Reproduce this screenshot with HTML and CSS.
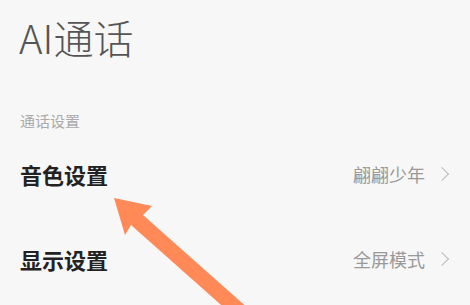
FILE: index.html
```html
<!DOCTYPE html>
<html>
<head>
<meta http-equiv="Content-Type" content="text/html; charset=utf-8"/>
<title>AI通话</title>
<link rel="stylesheet" href="styles.css">
</head>
<body>
<div class="page">
  <h1 class="title">AI通话</h1>

  <div class="group-label">通话设置</div>

  <div class="row">
    <span class="row-name">音色设置</span>
    <span class="row-value">翩翩少年<span class="chevron"></span></span>
  </div>

  <div class="row">
    <span class="row-name">显示设置</span>
    <span class="row-value">全屏模式<span class="chevron"></span></span>
  </div>

  <!-- annotation arrow drawn over the page -->
  <svg class="pointer" width="470" height="305" viewBox="0 0 470 305">
    <polygon fill="#ff8a58" points="114,198 152,206 143,215 250,310 238,320 131,225 125,235"/>
  </svg>
</div>
</body>
</html>
```

FILE: styles.css
```css
body {
  margin: 0;
  background-color: #f7f7f7;
  font-family: "Noto Sans CJK SC", "Noto Sans", sans-serif;
}

.page {
  position: relative;
  height: 305px;
  overflow: hidden;
  padding: 0 23px 0 19px;
}

.title {
  margin: 0;
  padding-top: 15px;
  font-size: 40px;
  line-height: 44px;
  font-weight: 300;
  color: #555;
}

.group-label {
  margin-top: 52px;
  padding-left: 1px;
  font-size: 15px;
  line-height: 20px;
  color: #aaa;
}

.row {
  display: flex;
  align-items: center;
  justify-content: space-between;
  height: 85px;
  padding-left: 1px;
}

.row:first-of-type {
  margin-top: 3px;
}

.row-name {
  font-size: 22px;
  font-weight: 700;
  color: #222;
}

.row-value {
  display: flex;
  align-items: center;
  font-size: 18px;
  color: #999;
}

.chevron {
  width: 9px;
  height: 9px;
  margin-left: 12px;
  border-top: 1.5px solid #bbb;
  border-right: 1.5px solid #bbb;
  transform: rotate(45deg);
}

.pointer {
  position: absolute;
  left: 0;
  top: 0;
}
```
